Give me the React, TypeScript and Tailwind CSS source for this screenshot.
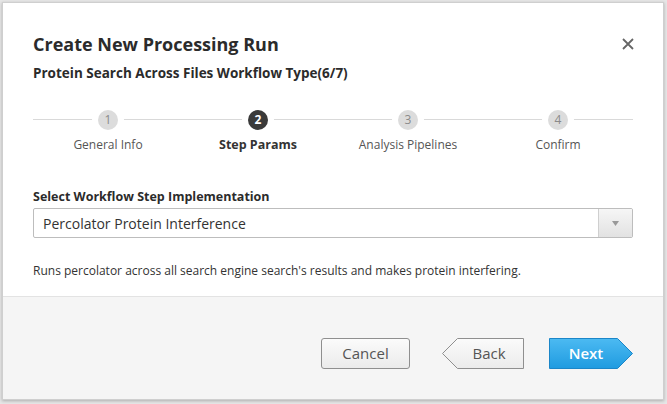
import React from "react";

const STEPS = [
  { n: 1, label: "General Info" },
  { n: 2, label: "Step Params", active: true },
  { n: 3, label: "Analysis Pipelines" },
  { n: 4, label: "Confirm" },
];

const font = { fontFamily: '"Open Sans", "Noto Sans", sans-serif' };

const Step = ({ n, label, active }: { n: number; label: string; active?: boolean }) => (
  <div className="flex flex-col items-center w-[150px]">
    <div className="relative flex items-center justify-center w-full h-[22px]">
      <div className="absolute left-0 right-0 top-[10px] h-px bg-[#d9d9d9]" />
      <div
        className={`relative z-10 flex items-center justify-center w-[20px] h-[20px] rounded-full text-[12px] ${
          active ? "bg-[#3a3a3a] text-white font-bold" : "bg-[#dcdcdc] text-[#8a8a8a]"
        } ring-[6px] ring-white`}
      >
        {n}
      </div>
    </div>
    <div
      className={`mt-[5px] leading-[18px] ${
        active ? "text-[12.5px] font-bold text-[#333]" : "text-[12px] text-[#555]"
      }`}
    >
      {label}
    </div>
  </div>
);

const ArrowButton = ({
  label,
  dir,
  primary,
}: {
  label: string;
  dir: "left" | "right";
  primary?: boolean;
}) => {
  const pts =
    dir === "left"
      ? "15.5,0.5 81.5,0.5 81.5,30.5 15.5,30.5 0.5,15.5"
      : "0.5,0.5 68.5,0.5 83.5,15.5 68.5,30.5 0.5,30.5";
  const id = primary ? "gNext" : "gBack";
  return (
    <button className="relative flex items-center justify-center w-[84px] h-[31px]">
      <svg className="absolute inset-0" width="84" height="31" viewBox="0 0 84 31">
        <defs>
          <linearGradient id={id} x1="0" y1="0" x2="0" y2="1">
            {primary ? (
              <>
                <stop offset="0" stopColor="#4cbaf2" />
                <stop offset="1" stopColor="#1f9be0" />
              </>
            ) : (
              <>
                <stop offset="0" stopColor="#fbfbfb" />
                <stop offset="1" stopColor="#ebebeb" />
              </>
            )}
          </linearGradient>
        </defs>
        <polygon points={pts} fill={`url(#${id})`} stroke={primary ? "#1b86c8" : "#8f8f8f"} strokeWidth="1" />
      </svg>
      <span
        className={`relative text-[15px] ${primary ? "text-white font-semibold" : "text-[#555]"} ${
          dir === "left" ? "pl-[10px]" : "pr-[10px]"
        }`}
      >
        {label}
      </span>
    </button>
  );
};

export default function App() {
  return (
    <div className="w-[667px] h-[404px] bg-[#e6e6e6] p-[2px] pb-[4px] pr-[3px]" style={font}>
      <div className="flex flex-col h-full bg-white border border-[#cfcfcf] shadow-[0_1px_3px_rgba(0,0,0,0.25)]">
        <div className="flex-1 px-[30px] pt-[28px]">
          <div className="flex items-center justify-between">
            <h1 className="text-[18px] leading-[26px] font-bold text-[#2b2b2b]">Create New Processing Run</h1>
            <svg width="12" height="12" viewBox="0 0 12 12" className="mr-[-1px]">
              <path d="M1 1L11 11M11 1L1 11" stroke="#666" strokeWidth="1.8" />
            </svg>
          </div>
          <h2 className="mt-[6px] text-[13.5px] leading-[20px] font-bold text-[#2b2b2b]">
            Protein Search Across Files Workflow Type(6/7)
          </h2>

          <div className="flex mt-[26px]">
            {STEPS.map((s) => (
              <Step key={s.n} {...s} />
            ))}
          </div>

          <div className="mt-[34px] text-[12.5px] leading-[18px] font-bold text-[#2b2b2b]">
            Select Workflow Step Implementation
          </div>
          <div className="mt-[2px] flex h-[30px] border border-[#bdbdbd] rounded-[2px] overflow-hidden">
            <div className="flex-1 flex items-center px-[9px] text-[14px] text-[#333]">
              Percolator Protein Interference
            </div>
            <div className="w-[34px] flex items-center justify-center border-l border-[#cfcfcf] bg-gradient-to-b from-[#f6f6f6] to-[#e2e2e2]">
              <svg width="7" height="5" viewBox="0 0 7 5">
                <path d="M0 0H7L3.5 5Z" fill="#999" />
              </svg>
            </div>
          </div>

          <p className="mt-[24px] text-[12px] leading-[18px] text-[#333]">
            Runs percolator across all search engine search's results and makes protein interfering.
          </p>
        </div>

        <div className="h-[103px] bg-[#f5f5f5] border-t border-[#e3e3e3] flex items-center justify-end pr-[30px] pt-[10px]">
          <button className="w-[89px] h-[31px] mr-[32px] rounded-[3px] border border-[#8f8f8f] bg-gradient-to-b from-[#fbfbfb] to-[#ebebeb] text-[15px] text-[#555]">
            Cancel
          </button>
          <div className="mr-[23px]">
            <ArrowButton label="Back" dir="left" />
          </div>
          <ArrowButton label="Next" dir="right" primary />
        </div>
      </div>
    </div>
  );
}
